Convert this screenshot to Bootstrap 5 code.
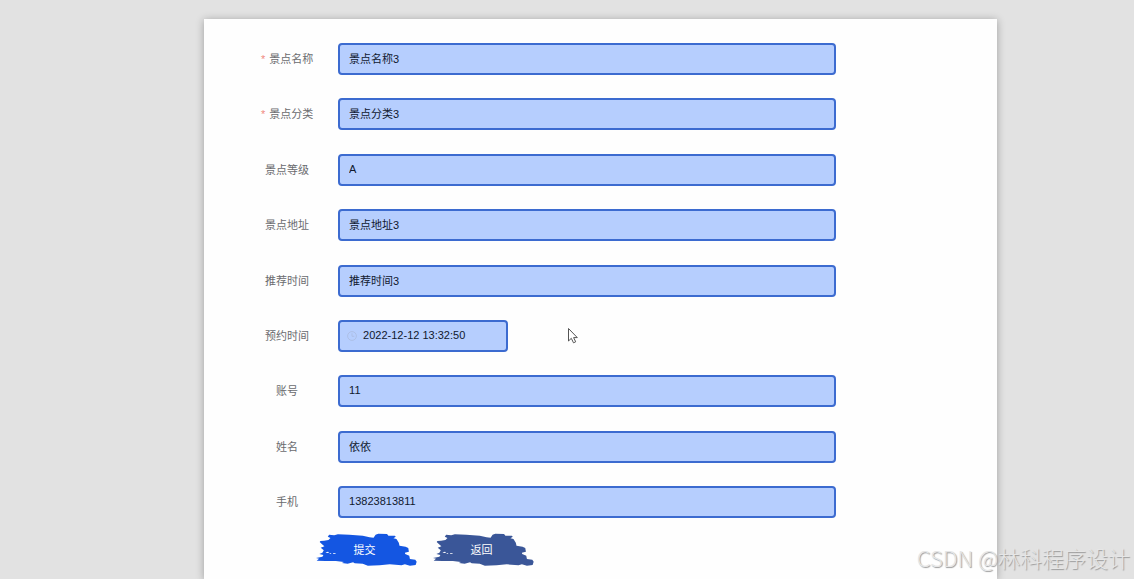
<!DOCTYPE html>
<html lang="zh-CN">
<head>
<meta charset="utf-8">
<meta name="viewport" content="width=device-width, initial-scale=1">
<title>景点预约</title>
<link href="https://cdn.jsdelivr.net/npm/bootstrap@5.3.0/dist/css/bootstrap.min.css" rel="stylesheet">
<style>
  body {
    background: #e2e2e2;
    font-family: "Liberation Sans", "Noto Sans CJK SC", sans-serif;
    font-size: 11px;
    line-height: 16px;
  }
  .booking-page { min-height: 100vh; padding-top: 19px; overflow: hidden; }
  .booking-panel {
    width: 69.9%;
    margin-left: 18%;
    padding: 24px 32px 12px;
    background: #fefefe;
    box-shadow: 0 1px 8px rgba(0, 0, 0, .3);
  }
  .field-list { min-height: 475px; }
  .field-label { width: 102px; color: #6a6b6e; }
  .field-label .star { color: #f08a80; margin-right: 4px; }
  .field-body { width: 68.3%; }
  .booking-panel .form-control {
    height: 32px;
    padding: 0 9px 2px;
    border: 2px solid #3c6bd0;
    border-radius: 4px;
    background: #b6cefe;
    color: #10182e;
    font-size: 11px;
    line-height: 16px;
  }
  .date-box { width: 170px; }
  .booking-panel .date-box .form-control { padding-left: 23px; }
  .date-box svg { left: 9px; top: 11px; }
  .action-row { padding-left: 80px; margin-top: 15px; gap: 16px; }
  .brush-btn {
    width: 101px; height: 33px; border: 0; padding: 0 4px 0 0;
    background: none; color: #fff; font-size: 11px; line-height: 16px;
  }
  .brush-submit { --ink: #1456e2; }
  .brush-back { --ink: #3a5698; }
  .brush-btn svg { fill: var(--ink); }
  .pointer { left: 567px; top: 327px; }
  .watermark {
    right: 4px; bottom: 6px;
    font-family: "Noto Sans CJK SC", sans-serif;
    font-size: 22px; line-height: 32px; font-weight: 300;
    color: #e6e6e6;
    text-shadow: 1px 1px 1px #999;
  }
</style>
</head>
<body>
<svg width="0" height="0" class="position-absolute" aria-hidden="true">
  <symbol id="brush" viewBox="51 39 300 99" preserveAspectRatio="none">
    <path fill-rule="evenodd" d="M90 44L105 46 116 43 150 44 190 47 210 52 222 53 228 44 236 41 262 42 266 47 285 47 288 50 281 55 290 57 297 68 299 77 317 80 325 84 327 95 315 98 316 102 328 107 330 117 346 119 350 125 347 135 330 137 315 133 305 136 270 133 240 136 205 137 190 131 166 130 161 127 145 131 128 129 134 126 110 123 80 123 53 122 60 116 51 114 70 110 73 105 61 102 70 98 74 91 65 83 76 79 69 73 62 66 64 63 75 62 88 60 94 54 86 50ZM79 97L87 95 90 98 84 99ZM90 101L94 99 97 102ZM101 99L110 100 108 102 102 101Z"/>
  </symbol>
</svg>
<main class="booking-page position-relative d-flex flex-column">
  <form class="booking-panel flex-grow-1">
    <div class="field-list d-flex flex-column justify-content-between">
      <div class="d-flex align-items-center">
        <label class="field-label text-center" for="spotName"><span class="star">*</span>景点名称</label>
        <div class="field-body"><input class="form-control" id="spotName" type="text" value="景点名称3" required></div>
      </div>
      <div class="d-flex align-items-center">
        <label class="field-label text-center" for="spotType"><span class="star">*</span>景点分类</label>
        <div class="field-body"><input class="form-control" id="spotType" type="text" value="景点分类3" required></div>
      </div>
      <div class="d-flex align-items-center">
        <label class="field-label text-center" for="spotGrade">景点等级</label>
        <div class="field-body"><input class="form-control" id="spotGrade" type="text" value="A"></div>
      </div>
      <div class="d-flex align-items-center">
        <label class="field-label text-center" for="spotAddress">景点地址</label>
        <div class="field-body"><input class="form-control" id="spotAddress" type="text" value="景点地址3"></div>
      </div>
      <div class="d-flex align-items-center">
        <label class="field-label text-center" for="bestTime">推荐时间</label>
        <div class="field-body"><input class="form-control" id="bestTime" type="text" value="推荐时间3"></div>
      </div>
      <div class="d-flex align-items-center">
        <label class="field-label text-center" for="bookTime">预约时间</label>
        <div class="date-box position-relative">
          <input class="form-control" id="bookTime" type="text" value="2022-12-12 13:32:50">
          <svg class="position-absolute" width="10" height="10" viewBox="0 0 10 10" fill="none" stroke="#adbfe6" aria-hidden="true"><circle cx="5" cy="5" r="4.4"/><path d="M5 2.3V5.3H7.3"/></svg>
        </div>
      </div>
      <div class="d-flex align-items-center">
        <label class="field-label text-center" for="account">账号</label>
        <div class="field-body"><input class="form-control" id="account" type="text" value="11"></div>
      </div>
      <div class="d-flex align-items-center">
        <label class="field-label text-center" for="fullName">姓名</label>
        <div class="field-body"><input class="form-control" id="fullName" type="text" value="依依"></div>
      </div>
      <div class="d-flex align-items-center">
        <label class="field-label text-center" for="phone">手机</label>
        <div class="field-body"><input class="form-control" id="phone" type="tel" value="13823813811"></div>
      </div>
    </div>
    <div class="action-row d-flex">
      <button type="button" class="brush-btn brush-submit position-relative"><svg class="position-absolute top-0 start-0 w-100 h-100" aria-hidden="true"><use href="#brush"/></svg><span class="position-relative">提交</span></button>
      <button type="button" class="brush-btn brush-back position-relative"><svg class="position-absolute top-0 start-0 w-100 h-100" aria-hidden="true"><use href="#brush"/></svg><span class="position-relative">返回</span></button>
    </div>
  </form>
  <svg class="pointer position-absolute" width="12" height="18" viewBox="0 0 12 18" fill="#fff" stroke="#555" aria-hidden="true"><path d="M1.5 1.5V14L4.3 11.3 6.5 15.8 8.7 14.8 6.6 10.6H10.3Z"/></svg>
  <div class="watermark position-absolute text-nowrap">CSDN @林科程序设计</div>
</main>
<script src="https://cdn.jsdelivr.net/npm/bootstrap@5.3.0/dist/js/bootstrap.bundle.min.js"></script>
</body>
</html>
